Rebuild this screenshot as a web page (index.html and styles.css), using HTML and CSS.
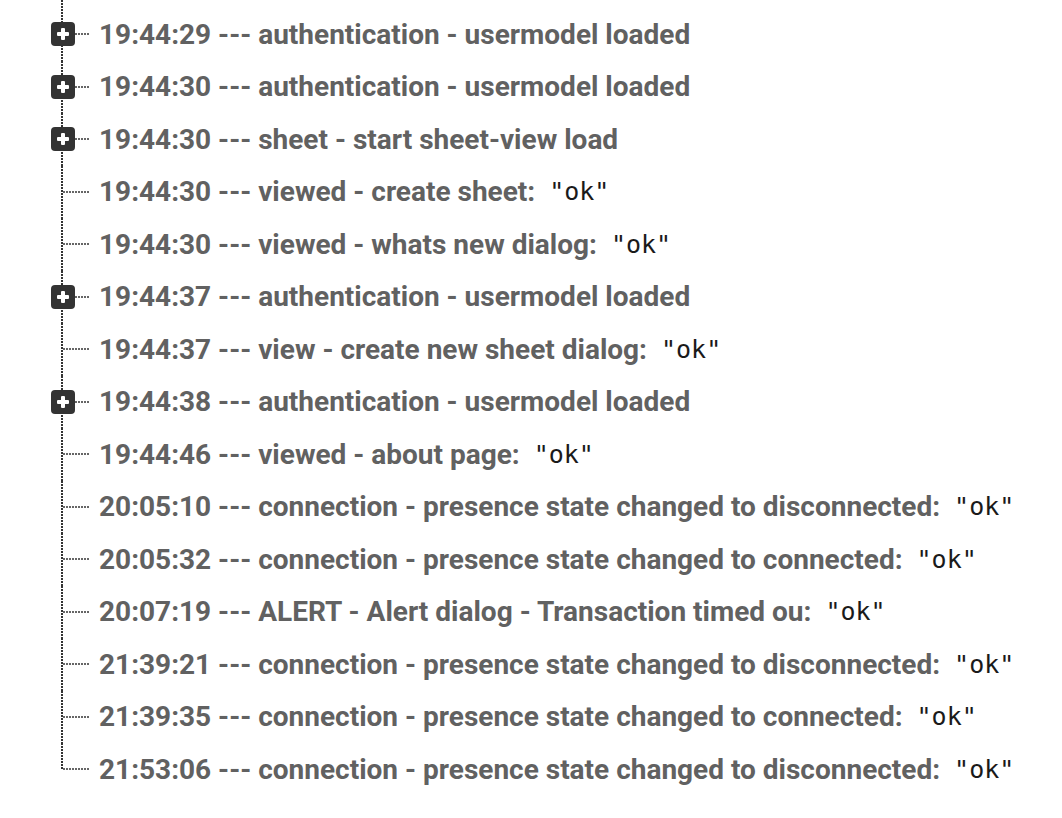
FILE: index.html
```html
<!DOCTYPE html>
<html lang="en">
<head>
<meta charset="utf-8">
<title>Events</title>
<link rel="stylesheet" href="styles.css">
</head>
<body>
<ul class="tree">
  <li class="node branch"><span class="toggle"></span><span class="key">19:44:29 --- authentication - usermodel loaded</span></li>
  <li class="node branch"><span class="toggle"></span><span class="key">19:44:30 --- authentication - usermodel loaded</span></li>
  <li class="node branch"><span class="toggle"></span><span class="key">19:44:30 --- sheet - start sheet-view load</span></li>
  <li class="node"><span class="key">19:44:30 --- viewed - create sheet:</span><span class="val">"ok"</span></li>
  <li class="node"><span class="key">19:44:30 --- viewed - whats new dialog:</span><span class="val">"ok"</span></li>
  <li class="node branch"><span class="toggle"></span><span class="key">19:44:37 --- authentication - usermodel loaded</span></li>
  <li class="node"><span class="key">19:44:37 --- view - create new sheet dialog:</span><span class="val">"ok"</span></li>
  <li class="node branch"><span class="toggle"></span><span class="key">19:44:38 --- authentication - usermodel loaded</span></li>
  <li class="node"><span class="key">19:44:46 --- viewed - about page:</span><span class="val">"ok"</span></li>
  <li class="node"><span class="key">20:05:10 --- connection - presence state changed to disconnected:</span><span class="val">"ok"</span></li>
  <li class="node"><span class="key">20:05:32 --- connection - presence state changed to connected:</span><span class="val">"ok"</span></li>
  <li class="node"><span class="key">20:07:19 --- ALERT - Alert dialog - Transaction timed ou:</span><span class="val">"ok"</span></li>
  <li class="node"><span class="key">21:39:21 --- connection - presence state changed to disconnected:</span><span class="val">"ok"</span></li>
  <li class="node"><span class="key">21:39:35 --- connection - presence state changed to connected:</span><span class="val">"ok"</span></li>
  <li class="node"><span class="key">21:53:06 --- connection - presence state changed to disconnected:</span><span class="val">"ok"</span></li>
</ul>
</body>
</html>
```
FILE: styles.css
```css
html, body {
  margin: 0;
  padding: 0;
  background: #fff;
}

.tree {
  list-style: none;
  margin: 0;
  padding: 8px 0 0 0;
  position: relative;
  font-family: Roboto, "Liberation Sans", sans-serif;
}

.node {
  position: relative;
  height: 52.5px;
  display: flex;
  align-items: center;
  padding-left: 99px;
  white-space: nowrap;
}

/* vertical guide */
.node::before {
  content: "";
  position: absolute;
  left: 61px;
  top: 0;
  bottom: 0;
  width: 2px;
  background: repeating-linear-gradient(to bottom, #333 0 2px, transparent 2px 3px);
}

.node:first-child::before {
  top: -8px;
}

.node:last-child::before {
  bottom: 50%;
  margin-bottom: -1px;
}

/* horizontal connector */
.node::after {
  content: "";
  position: absolute;
  left: 63px;
  width: 27px;
  top: 50%;
  height: 2px;
  margin-top: -1px;
  background: repeating-linear-gradient(to right, #666 0 2px, transparent 2px 3px);
}

.toggle {
  position: absolute;
  left: 51px;
  top: 50%;
  width: 24px;
  height: 24px;
  margin-top: -12px;
  background: #333;
  border-radius: 4px;
  z-index: 1;
}

.toggle::before,
.toggle::after {
  content: "";
  position: absolute;
  background: #fff;
  border-radius: 1px;
}

.toggle::before {
  left: 6px;
  right: 6px;
  top: 10px;
  height: 4px;
}

.toggle::after {
  top: 6px;
  bottom: 6px;
  left: 10px;
  width: 4px;
}

.key {
  font-size: 28px;
  font-weight: 700;
  color: #616161;
}

.val {
  margin-left: 14px;
  font-family: "DejaVu Sans Mono", "Liberation Mono", monospace;
  font-size: 25px;
  color: #1a1a1a;
}
```
